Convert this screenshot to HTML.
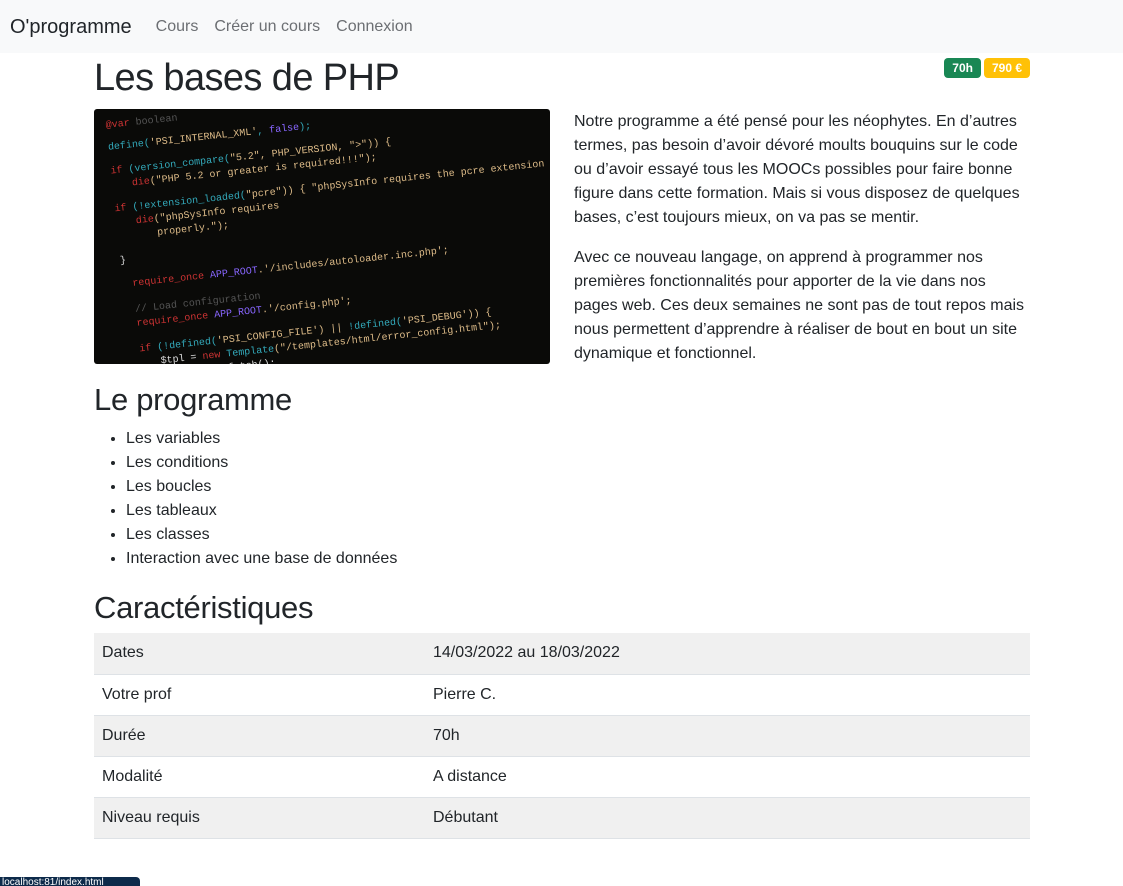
<!DOCTYPE html>
<html><head><meta charset="utf-8"><style>
*{box-sizing:border-box;margin:0;padding:0}
body{width:1123px;height:886px;overflow:hidden;font-family:"Liberation Sans",sans-serif;color:#212529;background:#fff;font-size:16px;line-height:24px;position:relative}
nav{height:53px;background:#f8f9fa;display:flex;align-items:center;padding-left:10px}
nav .brand{font-size:20px;color:#212529;margin-right:24px}
nav a{color:#6c6f73;font-size:16px;margin-right:16px}
.c{position:absolute;left:94px;width:936px}
h1{font-size:38px;font-weight:500;line-height:48px;letter-spacing:-0.6px}
.badges{position:absolute;right:0;top:4px;display:flex;gap:3px}
.b{font-size:12px;font-weight:700;color:#fff;padding:0 8px;height:20px;line-height:20px;border-radius:4px}
h2{font-size:31px;font-weight:500;line-height:38px;letter-spacing:-0.3px}
ul{padding-left:32px}
table{width:936px;border-collapse:collapse}
td{height:41px;padding:0 8px;border-bottom:1px solid #dee2e6}
tr:nth-child(odd) td{background:#f0f0f0}
p{margin-bottom:16px}
</style></head><body>
<nav><span class="brand">O'programme</span><a>Cours</a><a>Créer un cours</a><a>Connexion</a></nav>
<div class="c" style="top:54px">
<h1>Les bases de PHP</h1>
<div class="badges"><span class="b" style="background:#198754">70h</span><span class="b" style="background:#ffc107">790 €</span></div>
</div>
<svg style="position:absolute;left:94px;top:109px" width="456" height="255" viewBox="0 0 456 255"><rect width="456" height="255" rx="3" fill="#0a0a08"/>
<g font-family="Liberation Mono,monospace" font-size="10" transform="rotate(-6 0 0)">
<text x="10" y="20" fill="#c33">  @var <tspan fill="#555">boolean</tspan></text>
<text x="10" y="42" fill="#3ab">define(<tspan fill="#db8">'PSI_INTERNAL_XML'</tspan>, <tspan fill="#86f">false</tspan>);</text>
<text x="10" y="66" fill="#c33">if <tspan fill="#3ab">(version_compare(</tspan><tspan fill="#db8">"5.2", PHP_VERSION, "&gt;")) {</tspan></text>
<text x="30" y="80" fill="#c33">die<tspan fill="#db8">("PHP 5.2 or greater is required!!!");</tspan></text>
<text x="10" y="104" fill="#c33">if <tspan fill="#3ab">(!extension_loaded(</tspan><tspan fill="#db8">"pcre")) { "phpSysInfo requires the pcre extension to php in order to work</tspan></text>
<text x="30" y="118" fill="#c33">die<tspan fill="#db8">("phpSysInfo requires</tspan></text>
<text x="50" y="132" fill="#db8">properly.");</text>
<text x="10" y="156" fill="#ddd">}</text>
<text x="20" y="180" fill="#c33">require_once <tspan fill="#86f">APP_ROOT</tspan><tspan fill="#db8">.'/includes/autoloader.inc.php';</tspan></text>
<text x="20" y="206" fill="#555">// Load configuration</text>
<text x="20" y="220" fill="#c33">require_once <tspan fill="#86f">APP_ROOT</tspan><tspan fill="#db8">.'/config.php';</tspan></text>
<text x="20" y="246" fill="#c33">if <tspan fill="#3ab">(!defined(</tspan><tspan fill="#db8">'PSI_CONFIG_FILE') || </tspan><tspan fill="#3ab">!defined(</tspan><tspan fill="#db8">'PSI_DEBUG')) {</tspan></text>
<text x="40" y="260" fill="#ddd">$tpl = <tspan fill="#c33">new</tspan> <tspan fill="#3ab">Template</tspan><tspan fill="#db8">("/templates/html/error_config.html");</tspan></text>
<text x="40" y="274" fill="#3ab">echo <tspan fill="#ddd">$tpl-&gt;fetch();</tspan></text>
</g></svg>
<div style="position:absolute;left:574px;top:110px;width:456px">
<p>Notre programme a été pensé pour les néophytes. En d’autres termes, pas besoin d’avoir dévoré moults bouquins sur le code ou d’avoir essayé tous les MOOCs possibles pour faire bonne figure dans cette formation. Mais si vous disposez de quelques bases, c’est toujours mieux, on va pas se mentir.</p>
<p>Avec ce nouveau langage, on apprend à programmer nos premières fonctionnalités pour apporter de la vie dans nos pages web. Ces deux semaines ne sont pas de tout repos mais nous permettent d’apprendre à réaliser de bout en bout un site dynamique et fonctionnel.</p>
</div>
<div class="c" style="top:381px">
<h2>Le programme</h2>
<ul style="margin-top:8px"><li>Les variables</li><li>Les conditions</li><li>Les boucles</li><li>Les tableaux</li><li>Les classes</li><li>Interaction avec une base de données</li></ul>
<h2 style="margin-top:18px">Caractéristiques</h2>
<table style="margin-top:6px">
<tr><td style="width:331px">Dates</td><td>14/03/2022 au 18/03/2022</td></tr>
<tr><td>Votre prof</td><td>Pierre C.</td></tr>
<tr><td>Durée</td><td>70h</td></tr>
<tr><td>Modalité</td><td>A distance</td></tr>
<tr><td>Niveau requis</td><td>Débutant</td></tr>
</table>
</div>
<div style="position:absolute;left:0;top:877px;height:9px;width:140px;background:#0d2a4a;border-radius:0 4px 0 0;color:#fff;font-size:10px;line-height:12px;padding-left:2px;overflow:hidden">localhost:81/index.html</div>
</body></html>
